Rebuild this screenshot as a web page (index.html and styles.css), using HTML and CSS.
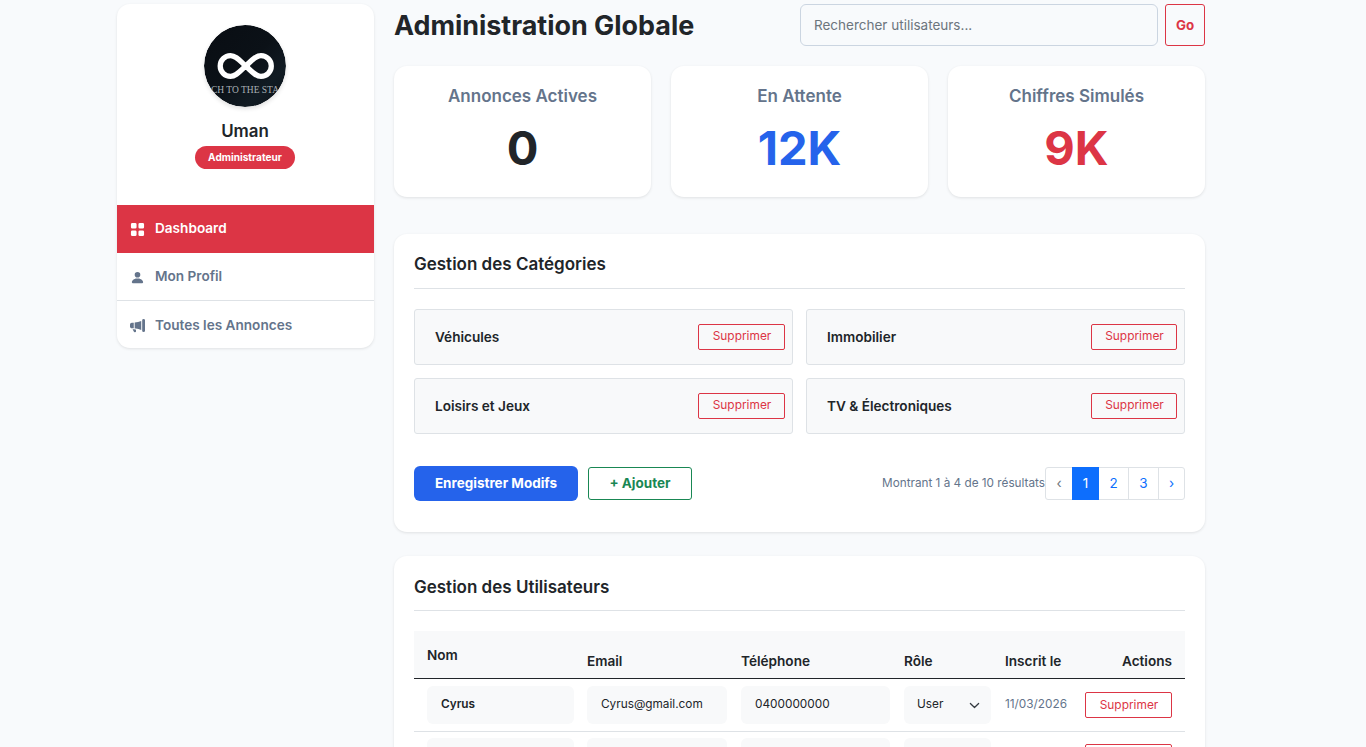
FILE: index.html
```html
<!DOCTYPE html>
<html lang="fr">
<head>
    <meta charset="UTF-8">
    <meta name="viewport" content="width=device-width, initial-scale=1.0">
    <title>Administration Globale</title>
    <link rel="stylesheet" href="styles.css">
</head>
<body>
    <div class="page">
        <aside class="sidebar">
            <div class="profile">
                <svg class="avatar" viewBox="0 0 82 82">
                    <defs>
                        <clipPath id="round"><circle cx="41" cy="41" r="41"/></clipPath>
                        <linearGradient id="night" x1="0" y1="0" x2="1" y2="1">
                            <stop offset="0" stop-color="#090d13"/>
                            <stop offset="0.5" stop-color="#0b1117"/>
                            <stop offset="0.75" stop-color="#111b23"/>
                            <stop offset="1" stop-color="#0a1118"/>
                        </linearGradient>
                    </defs>
                    <g clip-path="url(#round)">
                        <rect width="82" height="82" fill="url(#night)"/>
                        <path d="M41.700 41C36 36 32 30.700 26.500 30.700a10.300 10.300 0 0 0 0 20.600C32 51.300 36 46 41.700 41S51.500 30.700 57 30.700a10.300 10.300 0 0 1 0 20.600C51.500 51.300 47.400 46 41.700 41z" fill="none" stroke="#fff" stroke-width="5.300"/>
                        <text class="avatar-text" x="41" y="68" text-anchor="middle" textLength="68">CH TO THE STA</text>
                    </g>
                </svg>
                <h2>Uman</h2>
                <span class="badge">Administrateur</span>
            </div>
            <nav class="menu">
                <a class="menu-item active">
                    <svg class="icon" viewBox="0 0 16 16"><path d="M1 2.5A1.5 1.5 0 0 1 2.5 1h3A1.5 1.5 0 0 1 7 2.5v3A1.5 1.5 0 0 1 5.500 7h-3A1.500 1.500 0 0 1 1 5.500zm8 0A1.500 1.500 0 0 1 10.500 1h3A1.500 1.500 0 0 1 15 2.500v3A1.500 1.500 0 0 1 13.500 7h-3A1.500 1.500 0 0 1 9 5.500zm-8 8A1.500 1.500 0 0 1 2.500 9h3A1.500 1.500 0 0 1 7 10.500v3A1.500 1.500 0 0 1 5.500 15h-3A1.500 1.500 0 0 1 1 13.500zm8 0A1.500 1.500 0 0 1 10.500 9h3a1.500 1.500 0 0 1 1.500 1.500v3a1.500 1.500 0 0 1-1.500 1.500h-3A1.500 1.500 0 0 1 9 13.500z"/></svg>
                    Dashboard
                </a>
                <a class="menu-item">
                    <svg class="icon" viewBox="0 0 16 16"><path d="M3 14s-1 0-1-1 1-4 6-4 6 3 6 4-1 1-1 1zm5-6a3 3 0 1 0 0-6 3 3 0 0 0 0 6"/></svg>
                    Mon Profil
                </a>
                <a class="menu-item">
                    <svg class="icon" viewBox="0 0 16 16"><path d="M13 2.500a1.500 1.500 0 0 1 3 0v11a1.500 1.500 0 0 1-3 0zm-1 .724c-2.067.950-4.539 1.481-7 1.656v6.237a25 25 0 0 1 1.088.085c2.053.204 4.038.668 5.912 1.560zm-8 7.841V4.934c-.680.027-1.399.043-2.008.053A2.020 2.020 0 0 0 0 7v2c0 1.106.896 1.996 1.994 2.009l.496.008a64 64 0 0 1 1.510.048m1.390 1.081q.428.032.850.078l.253 1.690a1 1 0 0 1-.983 1.187h-.548a1 1 0 0 1-.916-.599l-1.314-2.480a66 66 0 0 1 1.692.064q.491.026.966.060"/></svg>
                    Toutes les Annonces
                </a>
            </nav>
        </aside>

        <main class="content">
            <header class="top">
                <h1>Administration Globale</h1>
                <form class="search">
                    <input type="text" placeholder="Rechercher utilisateurs...">
                    <button type="button" class="go">Go</button>
                </form>
            </header>

            <section class="stats">
                <div class="stat">
                    <h3>Annonces Actives</h3>
                    <p>0</p>
                </div>
                <div class="stat">
                    <h3>En Attente</h3>
                    <p class="blue">12K</p>
                </div>
                <div class="stat">
                    <h3>Chiffres Simulés</h3>
                    <p class="red">9K</p>
                </div>
            </section>

            <section class="card categories">
                <h2>Gestion des Catégories</h2>
                <div class="category-grid">
                    <div class="category"><span>Véhicules</span><button class="delete">Supprimer</button></div>
                    <div class="category"><span>Immobilier</span><button class="delete">Supprimer</button></div>
                    <div class="category"><span>Loisirs et Jeux</span><button class="delete">Supprimer</button></div>
                    <div class="category"><span>TV &amp; Électroniques</span><button class="delete">Supprimer</button></div>
                </div>
                <div class="card-footer">
                    <button class="save">Enregistrer Modifs</button>
                    <button class="add">+ Ajouter</button>
                    <span class="results">Montrant 1 à 4 de 10 résultats</span>
                    <div class="pagination">
                        <a class="disabled">‹</a>
                        <a class="current">1</a>
                        <a class="num">2</a>
                        <a class="num">3</a>
                        <a class="next">›</a>
                    </div>
                </div>
            </section>

            <section class="card users">
                <h2>Gestion des Utilisateurs</h2>
                <table>
                    <colgroup>
                        <col class="col-name">
                        <col class="col-email">
                        <col class="col-phone">
                        <col class="col-role">
                        <col class="col-date">
                        <col class="col-action">
                    </colgroup>
                    <thead>
                        <tr>
                            <th>Nom</th>
                            <th>Email</th>
                            <th>Téléphone</th>
                            <th>Rôle</th>
                            <th>Inscrit le</th>
                            <th>Actions</th>
                        </tr>
                    </thead>
                    <tbody>
                        <tr>
                            <td><input class="field bold" type="text" value="Cyrus"></td>
                            <td><input class="field" type="text" value="Cyrus@gmail.com"></td>
                            <td><input class="field" type="text" value="0400000000"></td>
                            <td>
                                <div class="field select">User
                                    <svg viewBox="0 0 16 16"><path d="m2 5 6 6 6-6"/></svg>
                                </div>
                            </td>
                            <td class="date">11/03/2026</td>
                            <td><button class="delete">Supprimer</button></td>
                        </tr>
                        <tr>
                            <td><input class="field bold" type="text"></td>
                            <td><input class="field" type="text"></td>
                            <td><input class="field" type="text"></td>
                            <td><div class="field select"></div></td>
                            <td class="date"></td>
                            <td><button class="delete" aria-label="Supprimer"></button></td>
                        </tr>
                    </tbody>
                </table>
            </section>
        </main>
    </div>
</body>
</html>
```
FILE: styles.css
```css
* {
    box-sizing: border-box;
}
body {
    margin: 0;
    height: 747px;
    overflow: hidden;
    background-color: #f8fafc;
    color: #212529;
    font-family: Inter, "Liberation Sans", sans-serif;
    font-size: 13.6px;
}
h1, h2, h3, p {
    margin: 0;
}
button, input {
    font-family: inherit;
}
.page {
    display: flex;
    align-items: flex-start;
    gap: 20px;
    width: 1088px;
    margin-left: 117px;
    padding-top: 4px;
}

/* Sidebar */
.sidebar {
    width: 257px;
    flex-shrink: 0;
    background-color: #fff;
    border-radius: 13px;
    overflow: hidden;
    box-shadow: 0 1px 3px rgba(0, 0, 0, 0.1);
}
.profile {
    display: flex;
    flex-direction: column;
    align-items: center;
    height: 201px;
    padding: 21px 1px 0 0;
}
.avatar {
    width: 82px;
    height: 82px;
    border-radius: 50%;
    box-shadow: 0 2px 4px rgba(0, 0, 0, 0.12);
}
.avatar-text {
    fill: #a9b0b5;
    font-family: "Liberation Serif", serif;
    font-size: 9.5px;
}
.profile h2 {
    margin-top: 14px;
    font-size: 16.9px;
    line-height: 20px;
    font-weight: 600;
}
.badge {
    margin-top: 5px;
    padding: 0 13px;
    background-color: #dc3545;
    border-radius: 12px;
    color: #fff;
    font-size: 10.1px;
    font-weight: 700;
    line-height: 23px;
}
.menu-item {
    display: flex;
    align-items: center;
    height: 48px;
    padding: 0 0 2px 13px;
    color: #64748b;
    font-weight: 600;
    border-bottom: 1px solid #dee2e6;
}
.menu-item:last-child {
    height: 47px;
    padding-bottom: 0;
    border-bottom: none;
}
.menu-item.active {
    background-color: #dc3545;
    border-color: #dc3545;
    color: #fff;
}
.icon {
    width: 15px;
    height: 15px;
    margin: 4px 10px 0 0;
    fill: currentColor;
}
.menu-item:last-child .icon {
    margin-top: 2px;
}

/* Header */
.content {
    width: 811px;
}
.top {
    display: flex;
    justify-content: space-between;
    align-items: center;
    height: 42px;
}
h1 {
    font-size: 26.9px;
    font-weight: 700;
}
.search {
    display: flex;
    gap: 7px;
}
.search input {
    width: 358px;
    height: 42px;
    padding: 0 13px;
    background-color: #f8fafc;
    border: 1px solid #cbd5e1;
    border-radius: 6px;
    font-size: 13.5px;
}
.search input::placeholder {
    color: #6c757d;
}
.go {
    width: 40px;
    height: 42px;
    padding: 0;
    background: none;
    border: 1px solid #dc3545;
    border-radius: 3px;
    color: #dc3545;
    font-size: 13.3px;
    font-weight: 700;
}

/* Stats */
.stats {
    display: grid;
    grid-template-columns: repeat(3, 1fr);
    gap: 20px;
    margin-top: 20px;
}
.stat {
    height: 131px;
    padding-top: 20px;
    background-color: #fff;
    border-radius: 13px;
    box-shadow: 0 1px 3px rgba(0, 0, 0, 0.1);
    text-align: center;
}
.stat h3 {
    color: #64748b;
    font-size: 17px;
    line-height: 20px;
    font-weight: 600;
}
.stat p {
    margin-top: 13px;
    font-size: 47px;
    line-height: 58px;
    font-weight: 700;
}
.blue {
    color: #2563eb;
}
.red {
    color: #dc3545;
}

/* Cards */
.card {
    padding: 20px;
    background-color: #fff;
    border-radius: 13px;
    box-shadow: 0 1px 3px rgba(0, 0, 0, 0.1);
}
.card h2 {
    height: 35px;
    margin-bottom: 20px;
    border-bottom: 1px solid #dee2e6;
    font-size: 17px;
    line-height: 20px;
    font-weight: 600;
}
.categories {
    height: 298px;
    margin-top: 37px;
}
.users {
    height: 300px;
    margin-top: 24px;
}
.users h2 {
    padding-top: 1px;
}
.category-grid {
    display: grid;
    grid-template-columns: 1fr 1fr;
    gap: 13px;
}
.category {
    display: flex;
    justify-content: space-between;
    align-items: center;
    height: 56px;
    padding: 0 7px 0 20px;
    background-color: #f8f9fa;
    border: 1px solid #dee2e6;
    border-radius: 3px;
    font-weight: 600;
}
.category .delete {
    margin-bottom: 1px;
}
.delete {
    display: block;
    width: 87px;
    height: 26px;
    padding: 0 0 2px 1px;
    background-color: transparent;
    border: 1px solid #dc3545;
    border-radius: 2px;
    color: #dc3545;
    font-size: 11.9px;
}
.category:nth-child(even) .delete {
    width: 86px;
}
.card-footer {
    display: flex;
    align-items: center;
    margin-top: 32px;
}
.save {
    width: 164px;
    height: 35px;
    padding: 0 0 1px;
    background-color: #2563eb;
    border: none;
    border-radius: 6px;
    color: #fff;
    font-size: 13.5px;
    font-weight: 700;
}
.add {
    width: 104px;
    height: 33px;
    margin-left: 10px;
    padding: 0 0 1px;
    background: none;
    border: 1px solid #198754;
    border-radius: 3px;
    color: #198754;
    font-size: 13.5px;
    font-weight: 700;
}
.results {
    margin-left: auto;
    padding-bottom: 2px;
    color: #64748b;
    font-size: 11.75px;
}
.pagination {
    display: flex;
    height: 33px;
    border: 1px solid #dee2e6;
    border-radius: 3px;
    font-size: 13.5px;
}
.pagination a {
    display: flex;
    align-items: center;
    justify-content: center;
    width: 26px;
    padding-bottom: 1px;
    color: #0d6efd;
}
.pagination .num {
    width: 30px;
    border-right: 1px solid #dee2e6;
}
.pagination .current {
    width: 27px;
    margin: -1px 0;
    background-color: #0d6efd;
    color: #fff;
}
.pagination .next {
    width: 25px;
}
.pagination .disabled {
    color: #6c757d;
}

/* Users table */
table {
    width: 771px;
    table-layout: fixed;
    border-collapse: separate;
    border-spacing: 0;
}
.col-name {
    width: 167px;
}
.col-email {
    width: 154px;
}
.col-phone {
    width: 163px;
}
.col-role {
    width: 101px;
}
.col-date {
    width: 80px;
}
.col-action {
    width: 106px;
}
th {
    height: 48px;
    padding: 0 6px 8px;
    background-color: #f8f9fa;
    border-bottom: 1px solid #212529;
    font-size: 13.6px;
    font-weight: 600;
    line-height: 18px;
    text-align: left;
    vertical-align: bottom;
}
td {
    height: 53px;
    padding: 0 8px 0 6px;
    border-bottom: 1px solid #dee2e6;
    vertical-align: middle;
}
tbody tr:last-child td {
    height: 51px;
}
th:first-child, td:first-child {
    padding-left: 13px;
}
td:first-child {
    padding-right: 7px;
}
th:first-child {
    padding-bottom: 14px;
}
th:last-child {
    padding-right: 13px;
    text-align: right;
}
.field {
    display: block;
    width: 100%;
    height: 38px;
    padding: 0 12px 3px 14px;
    background-color: #f8f9fa;
    border: none;
    border-radius: 6px;
    color: #212529;
    font-size: 11.8px;
}
.bold {
    font-weight: 600;
}
.select {
    display: flex;
    align-items: center;
    justify-content: space-between;
    padding: 0 11px 3px 13px;
}
.select svg {
    width: 11px;
    height: 11px;
    margin-top: 3px;
    fill: none;
    stroke: #343a40;
    stroke-width: 1.8;
    stroke-linecap: round;
    stroke-linejoin: round;
}
.date {
    padding-right: 0;
    padding-bottom: 3px;
    color: #64748b;
    font-size: 11.8px;
}
```
